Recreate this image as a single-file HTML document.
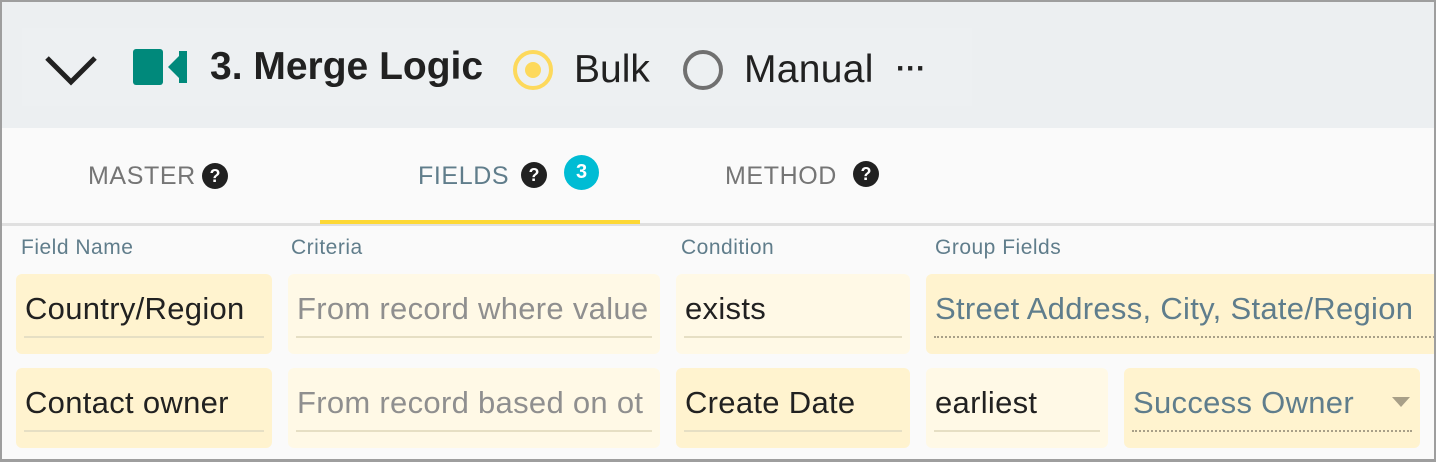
<!DOCTYPE html>
<html><head><style>
*{margin:0;padding:0;box-sizing:border-box}
body{width:1436px;height:462px;overflow:hidden;font-family:"Liberation Sans",sans-serif;background:#fafafa}
.frame{position:absolute;left:0;top:0;width:1436px;height:462px;border:2px solid #9e9e9e;border-bottom-width:3px}
.hdr{position:absolute;left:2px;top:2px;width:1432px;height:126px;background:#eceff1}
.inner{position:absolute;left:22px;top:28px;width:950px;height:78px;background:#edf0f2}
.abs{position:absolute;white-space:nowrap}
.tab{font-size:25px;color:#757575;letter-spacing:.6px}
.q{position:absolute;width:26px;height:26px;border-radius:50%;background:#212121;color:#fff;font-size:18px;font-weight:bold;text-align:center;line-height:26px}
.lbl{font-size:21px;color:#607d8b;letter-spacing:.5px}
.cell{position:absolute;border-radius:6px;background:#fff9e6}
.cell.d{background:#fff3cf}
.cell .t{position:absolute;left:9px;top:17px;font-size:31px;color:#212121;white-space:nowrap;letter-spacing:.3px}
.cell .u{position:absolute;left:8px;right:8px;bottom:16px;border-top:2px solid #e6dfc4}
.cell .dot{position:absolute;left:8px;right:8px;bottom:16px;border-top:2px dotted #a89f88}
.ph{color:#8f8f8f!important}
.bl{color:#5f7d8c!important}
</style></head><body>
<div class="hdr"></div>
<div class="inner"></div>
<svg class="abs" style="left:44px;top:53px" width="54" height="34"><path d="M3 5 L27 29 L51 5" fill="none" stroke="#212121" stroke-width="5"/></svg>
<svg class="abs" style="left:133px;top:49px" width="54" height="36"><rect x="0" y="0" width="30" height="36" rx="3" fill="#00897b"/><path d="M35 18 L46 7 L46 29 Z" fill="#00897b"/><rect x="46" y="2" width="8" height="32" fill="#00897b"/></svg>
<div class="abs" style="left:210px;top:45px;font-size:39px;font-weight:bold;color:#212121">3. Merge Logic</div>
<div class="abs" style="left:513px;top:50px;width:40px;height:40px;border:4px solid #fdd95c;border-radius:50%"><div style="position:absolute;left:8px;top:8px;width:16px;height:16px;border-radius:50%;background:#fdd95c"></div></div>
<div class="abs" style="left:574px;top:48px;font-size:39px;color:#212121">Bulk</div>
<div class="abs" style="left:683px;top:50px;width:40px;height:40px;border:4px solid #707070;border-radius:50%"></div>
<div class="abs" style="left:744px;top:48px;font-size:39px;color:#212121;letter-spacing:.3px">Manual</div>
<div class="abs" style="left:896px;top:52px;font-size:30px;font-weight:bold;color:#212121">···</div>

<div class="abs tab" style="left:88px;top:162px">MASTER</div><div class="q" style="left:202px;top:163px">?</div>
<div class="abs tab" style="left:418px;top:162px;color:#607d8b">FIELDS</div><div class="q" style="left:521px;top:162px">?</div>
<div class="q" style="left:564px;top:155px;width:35px;height:35px;line-height:35px;background:#00bcd4;font-size:20px">3</div>
<div class="abs tab" style="left:725px;top:162px">METHOD</div><div class="q" style="left:853px;top:161px">?</div>
<div class="abs" style="left:2px;top:223px;width:1432px;height:3px;background:#e0e0e0"></div>
<div class="abs" style="left:320px;top:220px;width:320px;height:4px;background:#fdd835"></div>

<div class="abs lbl" style="left:21px;top:236px">Field Name</div>
<div class="abs lbl" style="left:291px;top:236px">Criteria</div>
<div class="abs lbl" style="left:681px;top:236px">Condition</div>
<div class="abs lbl" style="left:935px;top:236px">Group Fields</div>

<div class="cell d" style="left:16px;top:274px;width:256px;height:80px"><div class="t">Country/Region</div><div class="u"></div></div>
<div class="cell" style="left:288px;top:274px;width:372px;height:80px"><div class="t ph">From record where value</div><div class="u"></div></div>
<div class="cell" style="left:676px;top:274px;width:234px;height:80px"><div class="t">exists</div><div class="u"></div></div>
<div class="cell d" style="left:926px;top:274px;width:520px;height:80px"><div class="t bl">Street Address, City, State/Region</div><div class="dot" style="right:0"></div></div>

<div class="cell d" style="left:16px;top:368px;width:256px;height:80px"><div class="t">Contact owner</div><div class="u"></div></div>
<div class="cell" style="left:288px;top:368px;width:372px;height:80px;overflow:hidden"><div class="t ph">From record based on ot</div><div class="u"></div></div>
<div class="cell d" style="left:676px;top:368px;width:234px;height:80px"><div class="t">Create Date</div><div class="u"></div></div>
<div class="cell" style="left:926px;top:368px;width:182px;height:80px"><div class="t">earliest</div><div class="u"></div></div>
<div class="cell d" style="left:1124px;top:368px;width:296px;height:80px"><div class="t bl">Success Owner</div><div class="dot"></div>
<div style="position:absolute;left:268px;top:29px;width:0;height:0;border-left:9px solid transparent;border-right:9px solid transparent;border-top:10px solid #a89f88"></div></div>
<div class="frame"></div>
</body></html>
